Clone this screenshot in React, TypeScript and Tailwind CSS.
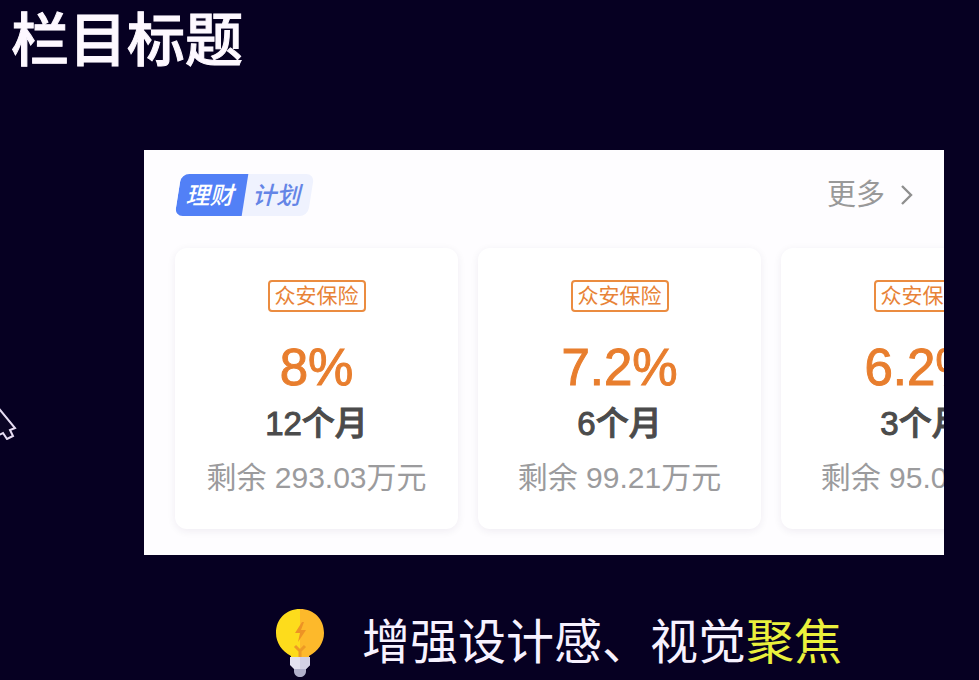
type Plan = { issuer: string; rate: string; term: string; remaining: string };

const plans: Plan[] = [
  { issuer: "众安保险", rate: "8%", term: "12个月", remaining: "剩余 293.03万元" },
  { issuer: "众安保险", rate: "7.2%", term: "6个月", remaining: "剩余 99.21万元" },
  { issuer: "众安保险", rate: "6.2%", term: "3个月", remaining: "剩余 95.03万元" },
];

function SectionTag() {
  return (
    <h2 className="relative isolate flex h-[42px] text-2xl leading-[42px] italic">
      <span
        aria-hidden="true"
        className="absolute inset-0 -z-10 flex -skew-x-[9deg] overflow-hidden rounded-lg bg-[#eff2fe]"
      >
        <span className="w-[67px] bg-[#5280f6]" />
      </span>
      <span className="w-[67px] pt-px pr-1 text-center font-medium text-white">理财</span>
      <span className="w-[66px] pt-px pr-1 text-center font-medium text-[#6485e6]">计划</span>
    </h2>
  );
}

function PlanCard({ plan }: { plan: Plan }) {
  return (
    <li className="flex w-[283px] shrink-0 flex-col items-center rounded-xl bg-white pt-8 pb-[29px] whitespace-nowrap shadow-[0_2px_8px_rgba(40,20,70,0.07)]">
      <span className="rounded-[4px] border-2 border-[#eb8c40] px-[5px] text-[21px] leading-7 text-[#e88337]">
        {plan.issuer}
      </span>
      <strong className="mt-7 text-[51px] leading-[56px] font-normal text-[#e87e2e] [-webkit-text-stroke:1px_#e87e2e]">
        {plan.rate}
      </strong>
      <span className="mt-1 text-[33px] leading-[48px] font-medium text-[#4b4b4b] [-webkit-text-stroke:1px_#4b4b4b]">
        {plan.term}
      </span>
      <span className="mt-2 text-[30px] leading-[44px] text-[#9b9b9d]">{plan.remaining}</span>
    </li>
  );
}

function Bulb() {
  return (
    <svg className="h-[68px] w-12 shrink-0" viewBox="0 0 48 68" aria-hidden="true">
      <path d="M24 0C10 0 0 10 0 24c0 10 6 18 15 23v4h9z" fill="#fddc1c" />
      <path d="M24 0c14 0 24 10 24 24 0 10-6 18-15 23v4h-9z" fill="#fdb92b" />
      <path d="M26 13l-7 11h5l-2 9 8-12h-5l3-8z" fill="#ed9325" />
      <path d="M19 37l5 5 5-5M24 42v7" fill="none" stroke="#ed9a25" strokeWidth="3" />
      <path d="M14 48h20v8l-4 4H18l-4-4z" fill="#e3e1f0" />
      <path d="M24 48h10v8l-4 4h-6z" fill="#d2d0e4" />
      <path d="M18 60h12v2c0 4-3 6-6 6s-6-2-6-6z" fill="#b0b0ca" />
    </svg>
  );
}

export default function App() {
  return (
    <main className="relative min-h-screen overflow-hidden bg-[#060022] font-['Liberation_Sans','Noto_Sans_CJK_SC',sans-serif]">
      <h1 className="pt-1 pl-[11px] text-[58px] leading-[74px] font-medium text-[#fdf8ff] [-webkit-text-stroke:1px_#fdf8ff]">
        栏目标题
      </h1>

      <section className="mt-[72px] mr-[35px] ml-36 overflow-hidden bg-[#fefdff] pt-6 pb-[26px] pl-[31px]">
        <header className="flex items-center justify-between pr-[31px] pl-[3px]">
          <SectionTag />
          <a href="#more" className="flex items-center gap-4 text-[29px] leading-[42px] text-[#999999]">
            更多
            <svg className="h-[22px] w-3" viewBox="0 0 12 22" fill="none" aria-hidden="true">
              <path d="M1 2l9 9-9 9" stroke="#8f8f8f" strokeWidth="2.4" />
            </svg>
          </a>
        </header>
        <ul className="mt-8 flex gap-5">
          {plans.map((plan) => (
            <PlanCard key={plan.rate} plan={plan} />
          ))}
        </ul>
      </section>

      <footer className="mt-[54px] flex items-center gap-[38px] pl-[276px]">
        <Bulb />
        <p className="text-5xl leading-[68px] whitespace-nowrap text-[#f7f2ff]">
          增强设计感、视觉<em className="text-[#eaf03c] not-italic">聚焦</em>
        </p>
      </footer>

      <svg className="absolute top-[404px] left-0 h-9 w-[18px]" viewBox="0 0 18 36" fill="none" aria-hidden="true">
        <path
          d="M-4 1L15 24L10 26L13 32L7 35L3 29L-3 32"
          fill="#0b0524"
          stroke="#e6dcf2"
          strokeWidth="2"
        />
      </svg>
    </main>
  );
}
